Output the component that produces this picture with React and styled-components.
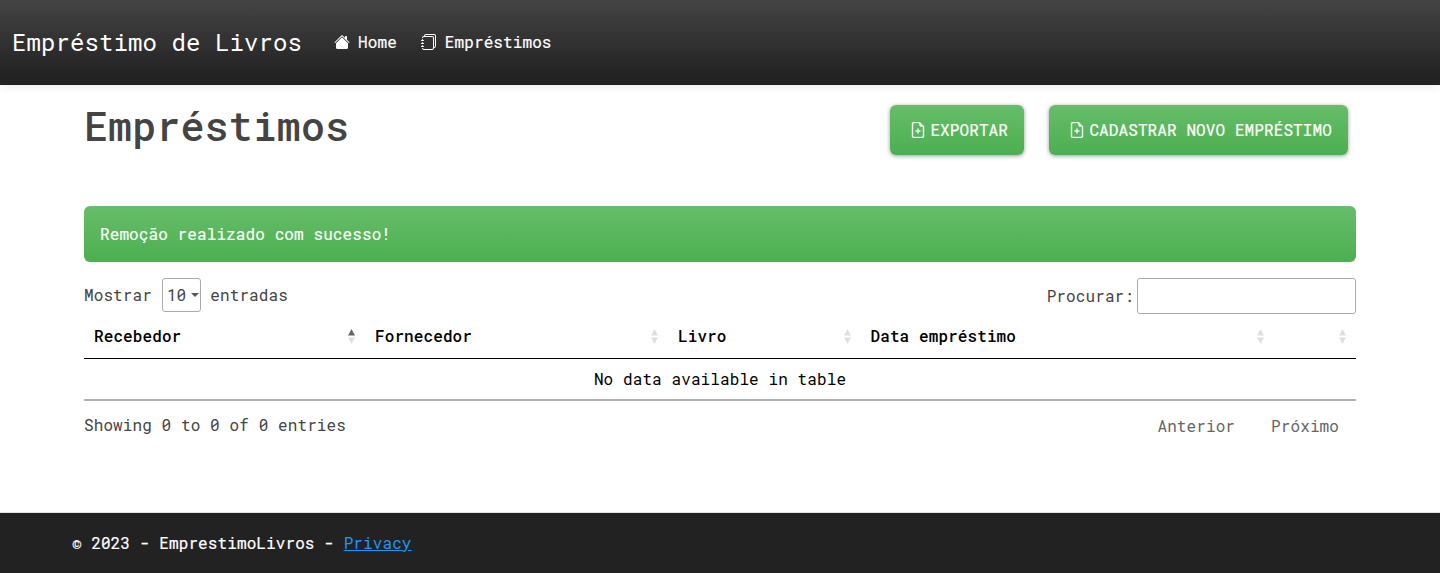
import React from "react";
import styled, { createGlobalStyle, css } from "styled-components";
import { BsHouseFill, BsJournals, BsFileEarmarkPlus } from "react-icons/bs";

const type = (size) => css`
  font-size: ${size}px;
  letter-spacing: 0.1px;
`;

const GlobalStyle = createGlobalStyle`
  *, *::before, *::after { box-sizing: border-box; }
  body {
    margin: 0;
    background: #fff;
    color: #444;
    font-family: "Roboto Mono", "DejaVu Sans Mono", monospace;
    font-weight: 400;
    line-height: 24px;
    ${type(16)}
  }
`;

const Page = styled.div`
  min-height: 573px;
  display: flex;
  flex-direction: column;
`;

const Navbar = styled.header`
  height: 85px;
  padding: 0 12px 2px;
  display: flex;
  align-items: center;
  color: #fff;
  background: linear-gradient(180deg, #444, #222 90%);
  box-shadow: 0 1px 10px rgba(0, 0, 0, 0.1);
`;

const Brand = styled.a`
  margin-right: 32px;
  line-height: 36px;
  white-space: nowrap;
  ${type(24)}
`;

const Nav = styled.nav`
  display: flex;
  gap: 24px;
  -webkit-text-stroke: 0.2px #fff;
`;

const NavLink = styled.a`
  display: flex;
  align-items: center;
  gap: 8px;
  svg { width: 16px; height: 16px; }
`;

const Main = styled.main`
  width: 1296px;
  margin: 0 auto;
  padding: 20px 12px 0;
  flex: 1;
`;

const TitleRow = styled.div`
  display: flex;
  justify-content: space-between;
  align-items: flex-start;
  height: 50px;
  padding-right: 8px;
`;

const Title = styled.h1`
  margin: -3px 0 0;
  font-weight: 500;
  line-height: 48px;
  ${type(40)}
`;

const Actions = styled.div`
  display: flex;
  gap: 25px;
`;

const Button = styled.button`
  display: flex;
  align-items: center;
  gap: 4.4px;
  height: 50px;
  width: ${(p) => p.$width}px;
  padding: 0 0 1px 20px;
  border: 0;
  border-radius: 6px;
  color: #fff;
  font-family: inherit;
  font-weight: 400;
  -webkit-text-stroke: 0.2px #fff;
  white-space: nowrap;
  background: linear-gradient(180deg, #67bd6a, #4caf50);
  box-shadow: 0 1px 4px rgba(0, 0, 0, 0.4);
  ${type(16)}
  svg { width: 16px; height: 16px; flex: none; stroke: #fff; stroke-width: 0.4px; }
`;

const Alert = styled.div`
  height: 56px;
  margin-top: 51px;
  padding: 16px;
  border-radius: 6px;
  color: #fff;
  -webkit-text-stroke: 0.15px #fff;
  background: linear-gradient(180deg, #67bd6a, #4caf50);
`;

const Controls = styled.div`
  display: flex;
  justify-content: space-between;
  align-items: flex-start;
  margin-top: 16px;
  height: 37px;
`;

const Length = styled.label`
  display: flex;
  align-items: center;
  height: 34px;
`;

const LengthSelect = styled.span`
  display: flex;
  align-items: center;
  justify-content: space-between;
  width: 39px;
  height: 34px;
  margin: 0 9.4px 0 10px;
  padding: 0 0.6px 0 4px;
  border: 1px solid #aaa;
  border-radius: 3px;
  &::after {
    content: "";
    border: 4px solid transparent;
    border-top-color: #555;
    border-bottom: 0;
  }
`;

const Search = styled.label`
  display: flex;
  align-items: center;
  gap: 3px;
`;

const SearchInput = styled.input`
  width: 219px;
  height: 36px;
  border: 1px solid #aaa;
  border-radius: 3px;
  background: transparent;
`;

const Table = styled.div`
  color: #000;
  border-bottom: 2px solid #b0b0b0;
`;

const HeadRow = styled.div`
  display: grid;
  grid-template-columns: 281px 303px 192.5px 413.5px 82px;
  height: 44px;
  border-bottom: 1px solid #000;
`;

const HeadCell = styled.div`
  display: flex;
  justify-content: space-between;
  align-items: center;
  padding: 0 10px 1px;
  font-weight: 500;
`;

const Sort = styled.svg`
  width: 7px;
  height: 15px;
  margin-left: auto;
`;

const EmptyRow = styled.div`
  height: 40px;
  padding-top: 8px;
  text-align: center;
`;

const TableFooter = styled.div`
  display: flex;
  justify-content: space-between;
  padding-top: 12px;
`;

const Pager = styled.div`
  display: flex;
  gap: 36px;
  padding: 1px 17px 0 0;
  color: #666;
`;

const Footer = styled.footer`
  height: 61px;
  padding: 18px 72px 0;
  border-top: 1px solid #dee2e6;
  background: #222;
  color: #fff;
  -webkit-text-stroke: 0.2px currentColor;
`;

const PrivacyLink = styled.a`
  color: #2196f3;
  -webkit-text-stroke: 0;
  text-decoration: underline;
`;

const columns = ["Recebedor", "Fornecedor", "Livro", "Data empréstimo", ""];

const SortIcon = ({ active }) => (
  <Sort viewBox="0 0 7 15">
    <path d="M0 6.5 3.5 0 7 6.5Z" fill={active ? "#666" : "#dfdfdf"} />
    <path d="M0 8.5h7L3.5 15Z" fill="#dfdfdf" />
  </Sort>
);

export default function App() {
  return (
    <Page>
      <GlobalStyle />
      <Navbar>
        <Brand>Empréstimo de Livros</Brand>
        <Nav>
          <NavLink><BsHouseFill />Home</NavLink>
          <NavLink><BsJournals />Empréstimos</NavLink>
        </Nav>
      </Navbar>
      <Main>
        <TitleRow>
          <Title>Empréstimos</Title>
          <Actions>
            <Button $width={134}><BsFileEarmarkPlus />EXPORTAR</Button>
            <Button $width={299}><BsFileEarmarkPlus />CADASTRAR NOVO EMPRÉSTIMO</Button>
          </Actions>
        </TitleRow>
        <Alert>Remoção realizado com sucesso!</Alert>
        <Controls>
          <Length>Mostrar<LengthSelect>10</LengthSelect>entradas</Length>
          <Search>Procurar:<SearchInput /></Search>
        </Controls>
        <Table>
          <HeadRow>
            {columns.map((name, i) => (
              <HeadCell key={i}>{name}<SortIcon active={i === 0} /></HeadCell>
            ))}
          </HeadRow>
          <EmptyRow>No data available in table</EmptyRow>
        </Table>
        <TableFooter>
          <span>Showing 0 to 0 of 0 entries</span>
          <Pager><span>Anterior</span><span>Próximo</span></Pager>
        </TableFooter>
      </Main>
      <Footer>© 2023 - EmprestimoLivros - <PrivacyLink>Privacy</PrivacyLink></Footer>
    </Page>
  );
}
